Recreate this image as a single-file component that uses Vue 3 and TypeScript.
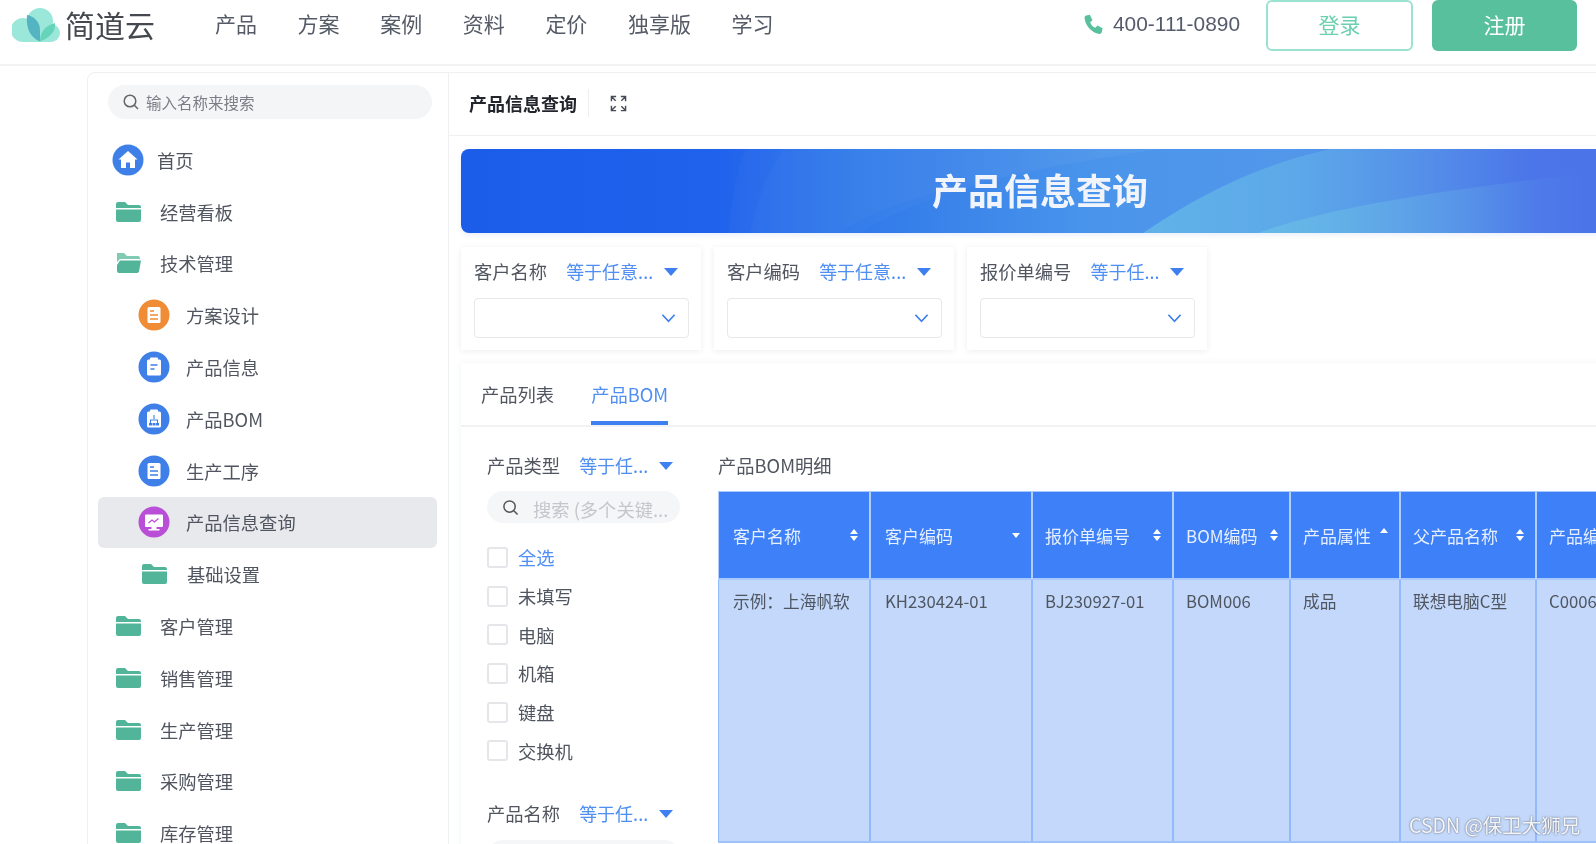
<script setup lang="ts">
interface MenuItem { label: string; icon: string; level: number; active?: boolean }
const navItems = ['产品', '方案', '案例', '资料', '定价', '独享版', '学习']
const menu: MenuItem[] = [
  { label: '首页', icon: 'home', level: 0 },
  { label: '经营看板', icon: 'folder', level: 0 },
  { label: '技术管理', icon: 'open', level: 0 },
  { label: '方案设计', icon: 'doc-orange', level: 1 },
  { label: '产品信息', icon: 'clip', level: 1 },
  { label: '产品BOM', icon: 'bom', level: 1 },
  { label: '生产工序', icon: 'doc-blue', level: 1 },
  { label: '产品信息查询', icon: 'screen', level: 1, active: true },
  { label: '基础设置', icon: 'folder', level: 1 },
  { label: '客户管理', icon: 'folder', level: 0 },
  { label: '销售管理', icon: 'folder', level: 0 },
  { label: '生产管理', icon: 'folder', level: 0 },
  { label: '采购管理', icon: 'folder', level: 0 },
  { label: '库存管理', icon: 'folder', level: 0 },
]
const filters = [
  { label: '客户名称', op: '等于任意...' },
  { label: '客户编码', op: '等于任意...' },
  { label: '报价单编号', op: '等于任...' },
]
const checks = ['全选', '未填写', '电脑', '机箱', '键盘', '交换机']
const columns = [
  { label: '客户名称', sort: 'both', value: '示例\uFF1A上海帆软', width: 151 },
  { label: '客户编码', sort: 'down', value: 'KH230424-01', width: 162 },
  { label: '报价单编号', sort: 'both', value: 'BJ230927-01', width: 141 },
  { label: 'BOM编码', sort: 'both', value: 'BOM006', width: 117 },
  { label: '产品属性', sort: 'up', value: '成品', width: 110 },
  { label: '父产品名称', sort: 'both', value: '联想电脑C型', width: 136 },
  { label: '产品编码', sort: 'none', value: 'C0006', width: 120 },
]
</script>

<template>
  <div class="page">
    <header class="topbar">
      <div class="brand">
        <svg class="logo" viewBox="0 0 48 34" aria-hidden="true">
          <g fill="#9be7d9">
            <circle cx="11" cy="22" r="12" />
            <circle cx="28" cy="13" r="13" />
            <circle cx="39" cy="25" r="9" />
            <rect x="11" y="20" width="28" height="14" />
          </g>
          <path d="M28 33.500C19 30 13.500 21 15 7c7 1 13 7 13 15z" fill="#55b4c2" />
          <path d="M28 33.500c0-9 5-16 15-18.500 1 9-6 15-15 18.500z" fill="#66d3bb" />
        </svg>
        <span class="brand-name">简道云</span>
      </div>
      <nav class="nav"><a v-for="n in navItems" :key="n">{{ n }}</a></nav>
      <div class="contact">
        <svg class="phone" viewBox="0 0 20 20" aria-hidden="true">
          <path d="M3 1.500 6.500.8 9 6 6.800 7.800c.8 2.400 2.600 4.400 5 5.400L13.700 11l5 2.600-.8 3.600c-.3 1.200-1.300 2-2.500 1.800C8.600 18 2.500 11.500 1.500 4.300 1.300 3 1.900 1.900 3 1.500z" fill="#58c09d" />
        </svg>
        <span class="tel">400-111-0890</span>
      </div>
      <button class="btn login">登录</button>
      <button class="btn register">注册</button>
    </header>

    <div class="workspace">
      <aside class="sidebar">
        <div class="side-search">
          <svg class="search-ico" viewBox="0 0 18 18" aria-hidden="true"><circle cx="8" cy="8" r="5.800" fill="none" stroke="#666" stroke-width="1.500" /><path d="m12.300 12.300 3.700 3.700" stroke="#666" stroke-width="1.500" /></svg>
          <span>输入名称来搜索</span>
        </div>
        <ul class="menu">
          <li v-for="m in menu" :key="m.label" :class="['menu-item', 'lv' + m.level, { active: m.active, isfolder: m.icon === 'folder' || m.icon === 'open' }]">
            <svg v-if="m.icon === 'folder'" class="folder" viewBox="0 0 25 20" aria-hidden="true">
              <path d="M2 0h7l3 3h11a2 2 0 0 1 2 2v1H0V2a2 2 0 0 1 2-2z" fill="#52b599" />
              <path d="M0 7.500h25V18a2 2 0 0 1-2 2H2a2 2 0 0 1-2-2z" fill="#52b599" />
            </svg>
            <svg v-else-if="m.icon === 'open'" class="folder" viewBox="0 0 25 20" aria-hidden="true">
              <path d="M1 0h7l3 3h11a2 2 0 0 1 2 2v1H4L1 9z" fill="#7fcbb4" />
              <path d="M4 7.500h21L23 18.500a2 2 0 0 1-2 1.500H3a2 2 0 0 1-2-2V12z" fill="#52b599" />
            </svg>
            <svg v-else class="round" viewBox="0 0 32 32" aria-hidden="true">
              <circle cx="16" cy="16" r="15.500" :fill="m.icon === 'doc-orange' ? '#ef8c35' : m.icon === 'screen' ? '#b94fd6' : '#3f80e8'" />
              <path v-if="m.icon === 'home'" d="M16 7 25.500 15.500H23V24h-5v-5.500h-4V24H9v-8.500H6.500z" fill="#fff" />
              <g v-else-if="m.icon === 'doc-orange' || m.icon === 'doc-blue'">
                <rect x="9.500" y="8" width="13" height="16" rx="1.500" fill="#fff" />
                <path d="M12 12h4M12 16h8M12 20h8" :stroke="m.icon === 'doc-orange' ? '#ef8c35' : '#3f80e8'" stroke-width="1.500" />
              </g>
              <g v-else-if="m.icon === 'clip'">
                <rect x="9" y="8.500" width="14" height="16" rx="1.500" fill="#fff" />
                <rect x="12" y="6.500" width="8" height="3.500" rx="1" fill="#fff" />
                <path d="M12.500 14h7M12.500 18h4" stroke="#3f80e8" stroke-width="1.600" />
              </g>
              <g v-else-if="m.icon === 'bom'">
                <rect x="9" y="8.500" width="14" height="16" rx="1.500" fill="#fff" />
                <rect x="12" y="6.500" width="8" height="3.500" rx="1" fill="#fff" />
                <path d="M16 12v4M12.500 20v-3h7v3" fill="none" stroke="#3f80e8" stroke-width="1.100" />
                <path d="M11 20h3v2.500h-3zM14.500 20h3v2.500h-3zM18 20h3v2.500h-3z" fill="#3f80e8" />
              </g>
              <g v-else>
                <rect x="7" y="8.500" width="18" height="12.500" rx="1" fill="#fff" />
                <path d="M13.500 21h5v2h3v1.500h-11V23h3z" fill="#fff" />
                <path d="m10.500 17 3.500-3 2.500 2 4-3.500" fill="none" stroke="#b94fd6" stroke-width="1.300" />
              </g>
            </svg>
            <span>{{ m.label }}</span>
          </li>
        </ul>
      </aside>

      <main class="main">
        <div class="tabbar">
          <strong>产品信息查询</strong>
          <i class="tab-divider"></i>
          <svg class="expand" viewBox="0 0 18 18" aria-hidden="true"><path d="M6.500 1.500h-5v5M11.500 1.500h5v5M6.500 16.500h-5v-5M11.500 16.500h5v-5M2 2l4 4M16 2l-4 4M2 16l4-4M16 16l-4-4" fill="none" stroke="#444b55" stroke-width="1.500" /></svg>
        </div>

        <div class="content">
          <section class="banner">
            <svg class="banner-art" viewBox="0 0 1158 85" preserveAspectRatio="none" aria-hidden="true">
              <defs>
                <linearGradient id="sheenA" gradientUnits="userSpaceOnUse" x1="682" y1="0" x2="1060" y2="0">
                  <stop offset="0" stop-color="#6fc6e6" stop-opacity=".6" />
                  <stop offset="1" stop-color="#6fc6e6" stop-opacity="0" />
                </linearGradient>
                <linearGradient id="sheenB" gradientUnits="userSpaceOnUse" x1="797" y1="0" x2="1120" y2="0">
                  <stop offset="0" stop-color="#6fc6e6" stop-opacity=".55" />
                  <stop offset="1" stop-color="#6fc6e6" stop-opacity="0" />
                </linearGradient>
              </defs>
              <path d="M268 85C270 55 275 25 284 0H700C560 20 420 50 380 85Z" fill="#fff" opacity=".025" />
              <path d="M289 85C295 55 305 25 323 0H700C560 20 450 50 400 85Z" fill="#fff" opacity=".025" />
              <path d="M682 85C740 45 800 15 870 0H1158V85Z" fill="url(#sheenA)" />
              <path d="M797 85C880 55 1000 40 1158 20V85Z" fill="url(#sheenB)" />
            </svg>
            <h1>产品信息查询</h1>
          </section>

          <section class="filters">
            <div v-for="f in filters" :key="f.label" class="filter-card">
              <div class="filter-head">
                <span class="flabel">{{ f.label }}</span>
                <span class="fop">{{ f.op }}</span>
                <i class="caret"></i>
              </div>
              <div class="select">
                <svg viewBox="0 0 16 10" aria-hidden="true"><path d="m1.500 1.500 6.500 7 6.500-7" fill="none" stroke="#3f80f0" stroke-width="1.800" /></svg>
              </div>
            </div>
          </section>

          <section class="panel">
            <div class="tabs">
              <span class="tab">产品列表</span>
              <span class="tab current">产品BOM</span>
            </div>
            <div class="panel-body">
              <div class="facets">
                <div class="facet-head">
                  <span class="flabel">产品类型</span>
                  <span class="fop">等于任...</span>
                  <i class="caret"></i>
                </div>
                <div class="facet-search">
                  <svg viewBox="0 0 18 18" aria-hidden="true"><circle cx="8" cy="8" r="6" fill="none" stroke="#555" stroke-width="1.600" /><path d="m12.500 12.500 4 4" stroke="#555" stroke-width="1.600" /></svg>
                  <span>搜索 (多个关键...</span>
                </div>
                <label v-for="(c, i) in checks" :key="c" class="check">
                  <i class="box"></i><span :class="{ all: i === 0 }">{{ c }}</span>
                </label>
                <div class="facet-head second">
                  <span class="flabel">产品名称</span>
                  <span class="fop">等于任...</span>
                  <i class="caret"></i>
                </div>
                <div class="facet-search stub"></div>
              </div>
              <div class="detail">
                <div class="detail-title">产品BOM明细</div>
                <div class="table">
                  <div class="col" v-for="c in columns" :key="c.label" :style="{ width: c.width + 'px' }">
                    <div class="th">
                      <span>{{ c.label }}</span>
                      <span v-if="c.sort !== 'none'" :class="['sort', 'sort-' + c.sort]">
                        <i v-if="c.sort !== 'down'" class="up"></i>
                        <i v-if="c.sort !== 'up'" class="down"></i>
                      </span>
                    </div>
                    <div class="td">{{ c.value }}</div>
                  </div>
                </div>
              </div>
            </div>
          </section>
        </div>
      </main>
    </div>
    <div class="watermark">CSDN @保卫大狮兄</div>
  </div>
</template>

<style>
html, body { margin: 0; background: #fff; overflow: hidden; }
</style>

<style scoped>
* { box-sizing: border-box; }
.page {
  position: relative;
  width: 1596px;
  height: 844px;
  overflow: hidden;
  background: #fff;
  font-family: "Noto Sans CJK SC", "Noto Sans", sans-serif;
  color: #4a505c;
  filter: blur(0.55px);
}
.topbar {
  height: 66px;
  display: flex;
  align-items: flex-start;
  border-bottom: 2px solid #f1f2f3;
}
.brand { display: flex; align-items: center; width: 215px; height: 50px; padding-left: 12px; }
.logo { width: 48px; height: 34px; flex: none; }
.brand-name { margin: -2px 0 0 5px; font-size: 30px; color: #45494f; line-height: 1; }
.nav { display: flex; gap: 40.600px; height: 46px; align-items: center; font-size: 21px; color: #555b66; }
.contact { display: flex; align-items: center; height: 48px; margin-left: auto; gap: 9px; }
.phone { width: 21px; height: 21px; }
.tel { font-family: "Liberation Sans", sans-serif; font-size: 20.900px; color: #555b6b; }
.btn { height: 51px; border-radius: 6px; font: 21px "Noto Sans CJK SC", sans-serif; padding: 0 0 4px; }
.login { width: 147px; margin-left: 26px; background: #fff; border: 2px solid #9be3d0; color: #6cd0b0; }
.register { width: 145px; margin: 0 19px 0 19px; background: #58c09d; border: 0; color: #fff; }

.workspace { display: flex; height: 778px; padding: 6px 0 0 87px; }
.sidebar {
  width: 362px;
  flex: none;
  border: 1px solid #eff0f2;
  border-bottom: 0;
  border-radius: 8px 0 0 0;
  padding: 12px 11px 0 10px;
}
.side-search {
  height: 34px;
  margin: 0 5px 0 10px;
  border-radius: 17px;
  background: #f4f5f7;
  display: flex;
  align-items: center;
  padding-left: 14px;
  gap: 6px;
  font-size: 15.500px;
  color: #7a7f87;
}
.search-ico { width: 18px; height: 18px; }
.menu { list-style: none; margin: 15px 0 0; padding: 0; }
.menu-item {
  height: 51.800px;
  display: flex;
  align-items: center;
  font-size: 18.300px;
  border-radius: 6px;
  color: #50555f;
}
.lv0 { padding-left: 14px; }
.lv1 { padding-left: 40px; }
.menu-item.isfolder { padding-left: 18px; }
.menu-item.isfolder.lv1 { padding-left: 44px; }
.menu-item.active { background: #e7e9ed; }
.round { width: 32px; height: 32px; flex: none; margin-right: 16px; }
.lv0 .round { margin-right: 13px; }
.folder { width: 25px; height: 20px; flex: none; margin-right: 19px; }
.lv1 .folder { margin-right: 20px; }

.main { width: 1200px; flex: none; }
.tabbar {
  height: 64px;
  display: flex;
  align-items: center;
  padding: 0 0 2px 20px;
  border-top: 1px solid #eff0f2;
  border-bottom: 1px solid #eef0f2;
}
.tabbar strong { font-size: 18px; color: #22262c; font-weight: 700; }
.tab-divider { width: 1px; height: 28px; background: #eee; margin: 0 21px 0 11px; }
.expand { width: 17px; height: 17px; }
.content { padding: 13px 0 0 12px; }
.banner {
  position: relative;
  width: 1158px;
  height: 84px;
  overflow: hidden;
  border-radius: 8px 0 0 8px;
  display: flex;
  align-items: center;
  justify-content: center;
  padding-bottom: 4px;
  background: linear-gradient(90deg, #1b5ce9 0%, #2062ec 22%, #2f78ea 33%, #4a95eb 55%, #5297ea 72%, #4f84e9 84%, #4b75e9 93%, #4d74ea 100%);
  box-shadow: 0 2px 5px rgba(40, 90, 200, .1);
}
.banner-art { position: absolute; inset: 0; width: 100%; height: 100%; }
.banner h1 { position: relative; margin: 0; color: #f1f5fb; font-size: 36px; font-weight: 700; line-height: 1; }
.filters { display: flex; gap: 13px; margin-top: 14px; }
.filter-card {
  width: 240px;
  height: 103px;
  padding: 11px 13px 0;
  box-shadow: 0 1px 6px rgba(60, 70, 90, .09);
  background: #fff;
}
.filter-head, .facet-head { display: flex; align-items: center; height: 26px; font-size: 18.300px; }
.flabel { color: #50555f; white-space: nowrap; }
.fop { color: #4f8ef2; margin-left: 19px; white-space: nowrap; font-size: 18px; }
.caret {
  margin: 2px 0 0 11px;
  width: 0; height: 0;
  border: 7px solid transparent;
  border-top: 8.500px solid #3f80f0;
  border-bottom: 0;
}
.select {
  height: 40px;
  margin-top: 14px;
  width: 215px;
  border: 1px solid #e6e8eb;
  border-radius: 4px;
  display: flex;
  align-items: center;
  justify-content: flex-end;
  padding-right: 12px;
}
.select svg { width: 15px; height: 10px; }
.panel { margin-top: 13px; box-shadow: 0 0 6px rgba(60, 70, 90, .07); }
.tabs { height: 64px; display: flex; padding-left: 20px; gap: 37px; border-bottom: 2px solid #f1f2f3; }
.tab { font-size: 18.300px; line-height: 62px; height: 62px; color: #50555f; }
.tab.current { color: #4f8ef2; border-bottom: 4px solid #3f80f0; line-height: 62px; }
.panel-body { display: flex; padding: 25px 0 0 26px; }
.facets { width: 231px; flex: none; }
.facet-search {
  width: 193px;
  height: 32px;
  margin-top: 13px;
  border-radius: 16px;
  background: #f5f6f8;
  display: flex;
  align-items: center;
  padding-left: 15px;
  gap: 14px;
  font-size: 18.300px;
  color: #c3c6cc;
  margin-bottom: 15px;
  white-space: nowrap;
}
.facet-search span { padding-top: 3px; }
.facet-search svg { width: 17px; height: 17px; flex: none; }
.check { display: flex; align-items: center; height: 38.700px; font-size: 18.300px; color: #50555f; }
.box { width: 21px; height: 21px; border: 2px solid #e4e6e9; border-radius: 3px; margin-right: 10px; }
.all { color: #4f8ef2; }
.facet-head.second { margin-top: 30px; }
.stub { margin-top: 14px; }
.detail { flex: none; }
.detail-title { font-size: 18.300px; height: 26px; line-height: 26px; color: #50555f; }
.table {
  display: flex;
  margin-top: 13px;
  height: 352px;
  border-top: 1px solid #a9c8fb;
  border-bottom: 2px solid #9fc1f9;
}
.col { flex: none; display: flex; flex-direction: column; }
.th {
  height: 88px;
  flex: none;
  background: #3d80f7;
  color: #e6efff;
  font-size: 17px;
  display: flex;
  align-items: center;
  justify-content: space-between;
  padding: 0 10px 0 14px;
  border-left: 2px solid #b3cefc;
  border-bottom: 2px solid #a9c8fb;
  white-space: nowrap;
  overflow: hidden;
}
.td {
  flex: 1;
  background: #c3d8fa;
  border-left: 2px solid #92bafa;
  padding: 7px 0 0 14px;
  line-height: 28px;
  font-size: 16.700px;
  color: #4f5661;
  white-space: nowrap;
  overflow: hidden;
}
.col:nth-child(n + 3) .th, .col:nth-child(n + 3) .td { padding-left: 12px; }
.col:first-child .th, .col:first-child .td { border-left-width: 1px; }
.sort { display: flex; flex-direction: column; gap: 2px; width: 9px; margin-left: 6px; flex: none; }
.sort-up { margin-top: -9px; }
.sort i { width: 0; height: 0; border: 4.500px solid transparent; }
.sort .up { border-top: 0; border-bottom: 5.500px solid #fff; }
.sort .down { border-bottom: 0; border-top: 5.500px solid #fff; }
.watermark {
  position: absolute;
  left: 1409px;
  top: 810px;
  font-size: 19.500px;
  color: #f4f5f7;
  text-shadow: 0 0 2px rgba(50, 50, 60, .8);
  white-space: nowrap;
}
</style>
